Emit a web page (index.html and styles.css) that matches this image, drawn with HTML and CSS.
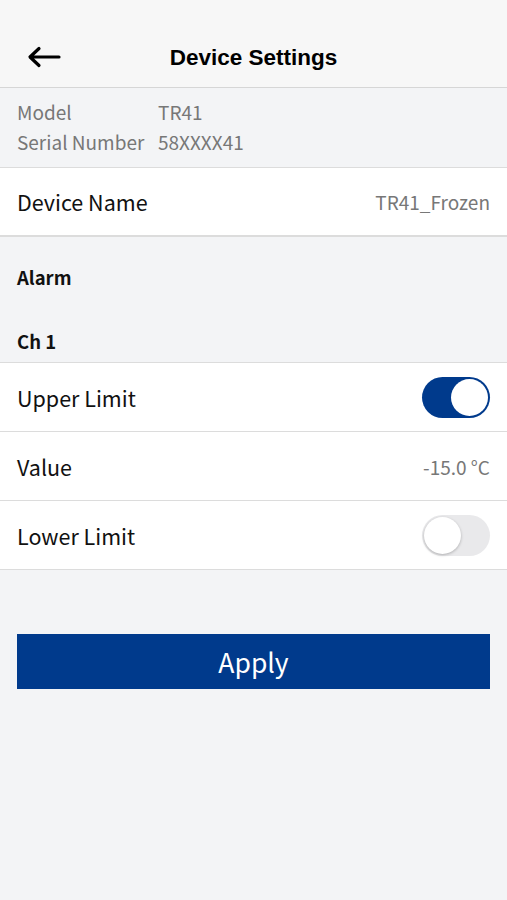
FILE: index.html
```html
<!DOCTYPE html>
<html>
<head>
<title>Device Settings</title>
<link rel="stylesheet" href="styles.css">
</head>
<body>
<div class="header">
<button class="back" type="button">
<svg width="34" height="22" viewBox="0 0 34 22"><path d="M32 11H4M12 2.5L3 11l9 8.5" fill="none" stroke="#000" stroke-width="3.2" stroke-linecap="round" stroke-linejoin="round"/></svg>
</button>
<h1>Device Settings</h1>
</div>

<div class="info">
<div class="info-row"><span class="info-label">Model</span><span>TR41</span></div>
<div class="info-row"><span class="info-label">Serial Number</span><span>58XXXX41</span></div>
</div>

<div class="row name-row">
<span>Device Name</span>
<span class="value">TR41_Frozen</span>
</div>

<div class="section-title alarm">Alarm</div>
<div class="section-title ch">Ch 1</div>

<div class="list">
<div class="row">
<span>Upper Limit</span>
<span class="toggle on"><span class="knob"></span></span>
</div>
<div class="row">
<span>Value</span>
<span class="value">-15.0 °C</span>
</div>
<div class="row">
<span>Lower Limit</span>
<span class="toggle"><span class="knob"></span></span>
</div>
</div>

<div class="actions">
<button class="apply" type="button">Apply</button>
</div>
</body>
</html>
```

FILE: styles.css
```css
body {
margin: 0;
background-color: #f3f4f6;
font-family: "Noto Sans CJK JP", "Noto Sans", sans-serif;
color: #111;
}

.header {
height: 88px;
background-color: #f7f7f7;
border-bottom: 1px solid #d6d6d6;
display: flex;
align-items: center;
justify-content: center;
position: relative;
padding-top: 28px;
box-sizing: border-box;
}

.header h1 {
margin: 0;
font-family: "Liberation Sans", Arial, sans-serif;
font-size: 22.5px;
font-weight: bold;
color: #000;
}

.back {
position: absolute;
left: 27px;
top: 46px;
border: none;
background: none;
padding: 0;
width: 34px;
height: 22px;
}

.info {
padding: 8px 17px 10px;
height: 80px;
box-sizing: border-box;
border-bottom: 1px solid #dcdcdc;
color: #777;
font-size: 19px;
}

.info-row {
display: flex;
height: 30px;
align-items: center;
}

.info-label {
width: 141px;
}

.row {
display: flex;
align-items: center;
justify-content: space-between;
padding: 0 17px;
background-color: #fff;
font-size: 21.5px;
height: 68px;
border-bottom: 1px solid #dcdcdc;
}

.name-row {
height: 66px;
border-bottom: 2px solid #dcdcdc;
padding-bottom: 1px;
}

.value {
color: #777;
font-size: 19px;
}

.section-title {
padding: 0 17px;
font-size: 18.5px;
font-weight: bold;
display: flex;
align-items: center;
}

.alarm {
height: 80px;
padding-bottom: 3px;
}

.ch {
height: 41px;
padding-bottom: 1px;
}

.list {
border-top: 1px solid #dcdcdc;
}

.toggle {
width: 68px;
height: 41px;
border-radius: 21px;
background-color: #e9e9eb;
position: relative;
display: block;
}

.toggle .knob {
position: absolute;
left: 2px;
top: 2px;
width: 37px;
height: 37px;
border-radius: 50%;
background-color: #fff;
box-shadow: 0 1px 3px rgba(0, 0, 0, 0.25);
}

.toggle.on {
background-color: #003a8c;
}

.toggle.on .knob {
left: 29px;
box-shadow: none;
}

.actions {
padding: 64px 17px 0;
}

.apply {
width: 100%;
height: 55px;
border: none;
background-color: #003a8c;
color: #fff;
font-family: "Noto Sans CJK JP", "Noto Sans", sans-serif;
font-size: 26.5px;
}
```
